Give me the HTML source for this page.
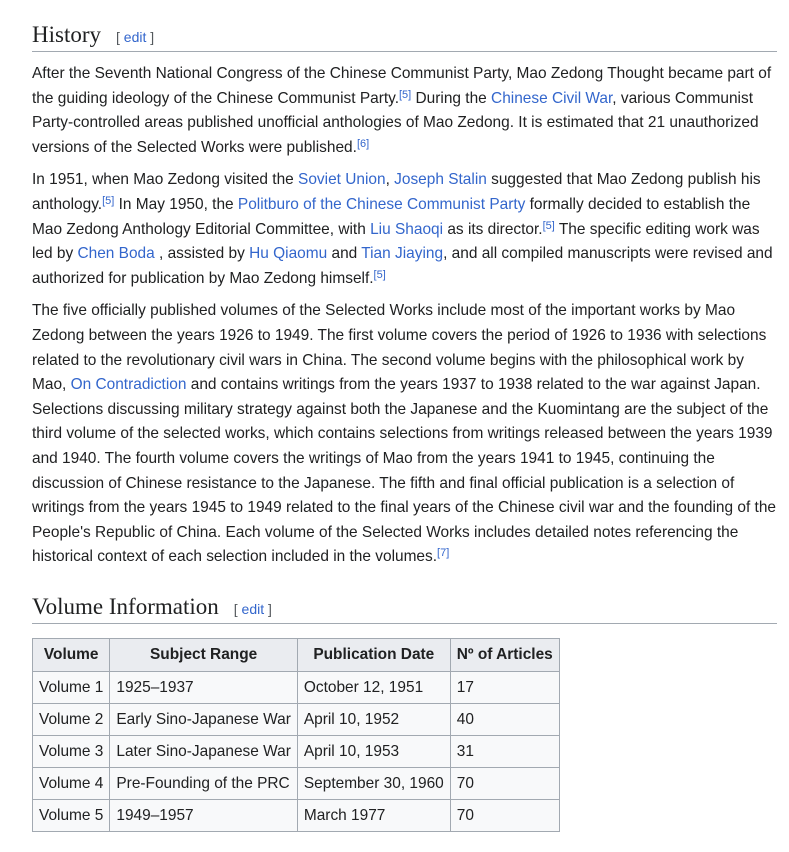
<!DOCTYPE html>
<html><head><meta charset="utf-8"><style>
body{margin:0;background:#fff;font-family:"Liberation Sans",sans-serif;color:#202122;}
.c{position:absolute;left:32px;width:745px;}
h2{font-family:"Liberation Serif",serif;font-weight:normal;font-size:23px;margin:0;border-bottom:1px solid #a2a9b1;line-height:28px;padding-bottom:0px;}
.e{font-family:"Liberation Sans",sans-serif;font-size:14px;color:#54595d;margin-left:15px;}
.e a{color:#3366cc;}
p{font-size:15.45px;line-height:24.6px;margin:0 0 8px 0;}
a{color:#3366cc;text-decoration:none;}
sup{font-size:11px;line-height:0;vertical-align:5px;}
table{border-collapse:collapse;font-size:15.45px;background:#f8f9fa;}
th,td{border:1px solid #a2a9b1;padding:0 6px;height:31px;text-align:left;}
th{background:#eaecf0;text-align:center;height:32px;}
</style></head><body>
<div class="c" style="top:21px">
<h2>History<span class="e">[ <a>edit</a> ]</span></h2>
<div style="height:10px"></div>
<p>After the Seventh National Congress of the Chinese Communist Party, Mao Zedong Thought became part of the guiding ideology of the Chinese Communist Party.<sup><a>[5]</a></sup> During the <a>Chinese Civil War</a>, various Communist Party-controlled areas published unofficial anthologies of Mao Zedong. It is estimated that 21 unauthorized versions of the Selected Works were published.<sup><a>[6]</a></sup></p>
<p>In 1951, when Mao Zedong visited the <a>Soviet Union</a>, <a>Joseph Stalin</a> suggested that Mao Zedong publish his anthology.<sup><a>[5]</a></sup> In May 1950, the <a>Politburo of the Chinese Communist Party</a> formally decided to establish the Mao Zedong Anthology Editorial Committee, with <a>Liu Shaoqi</a> as its director.<sup><a>[5]</a></sup> The specific editing work was led by <a>Chen Boda</a> , assisted by <a>Hu Qiaomu</a> and <a>Tian Jiaying</a>, and all compiled manuscripts were revised and authorized for publication by Mao Zedong himself.<sup><a>[5]</a></sup></p>
<p>The five officially published volumes of the Selected Works include most of the important works by Mao Zedong between the years 1926 to 1949. The first volume covers the period of 1926 to 1936 with selections related to the revolutionary civil wars in China. The second volume begins with the philosophical work by Mao, <a>On Contradiction</a> and contains writings from the years 1937 to 1938 related to the war against Japan. Selections discussing military strategy against both the Japanese and the Kuomintang are the subject of the third volume of the selected works, which contains selections from writings released between the years 1939 and 1940. The fourth volume covers the writings of Mao from the years 1941 to 1945, continuing the discussion of Chinese resistance to the Japanese. The fifth and final official publication is a selection of writings from the years 1945 to 1949 related to the final years of the Chinese civil war and the founding of the People's Republic of China. Each volume of the Selected Works includes detailed notes referencing the historical context of each selection included in the volumes.<sup><a>[7]</a></sup></p>
</div>
<div class="c" style="top:593px">
<h2>Volume Information<span class="e">[ <a>edit</a> ]</span></h2>
</div>
<table style="position:absolute;left:32px;top:638px">
<tr><th>Volume</th><th>Subject Range</th><th>Publication Date</th><th>Nº of Articles</th></tr>
<tr><td>Volume 1</td><td>1925–1937</td><td>October 12, 1951</td><td>17</td></tr>
<tr><td>Volume 2</td><td>Early Sino-Japanese War</td><td>April 10, 1952</td><td>40</td></tr>
<tr><td>Volume 3</td><td>Later Sino-Japanese War</td><td>April 10, 1953</td><td>31</td></tr>
<tr><td>Volume 4</td><td>Pre-Founding of the PRC</td><td>September 30, 1960</td><td>70</td></tr>
<tr><td>Volume 5</td><td>1949–1957</td><td>March 1977</td><td>70</td></tr>
</table>
</body></html>
